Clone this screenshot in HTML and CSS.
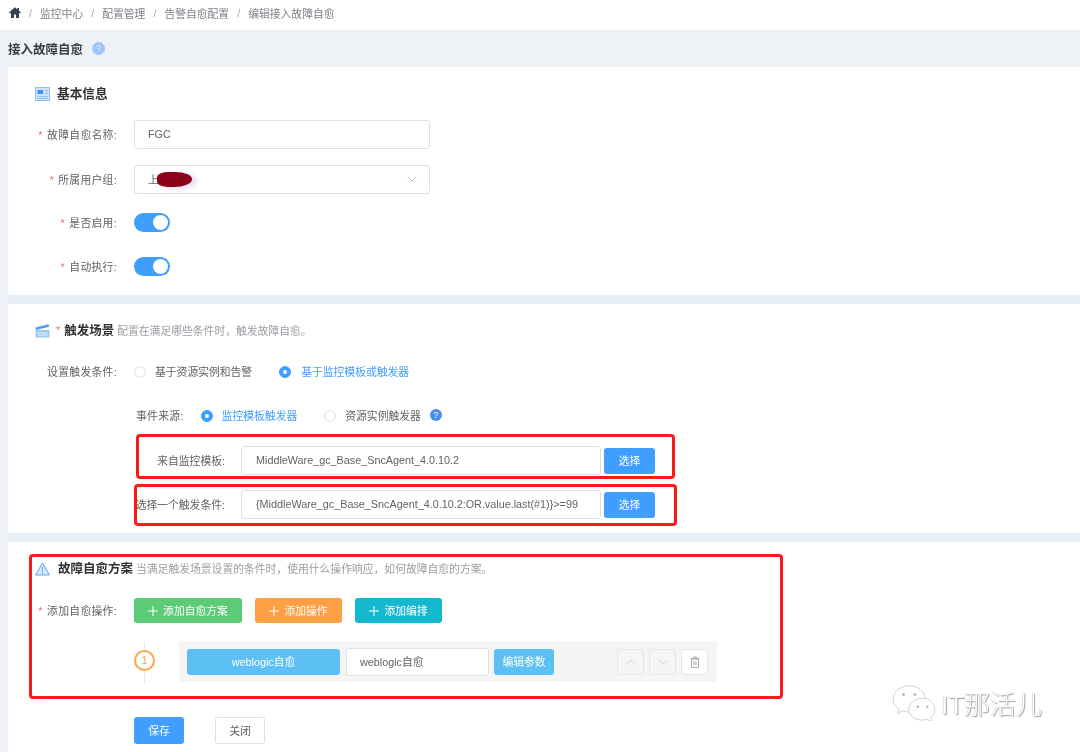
FILE: index.html
```html
<!DOCTYPE html>
<html lang="zh-CN">
<head>
<meta charset="utf-8">
<title>编辑接入故障自愈</title>
<link rel="stylesheet" href="styles.css">
</head>
<body>
<div class="page">
  <nav class="crumbs">
    <svg class="home" viewBox="0 0 12 11" width="12" height="11"><path d="M6 .3 0 5.500l.8.900L2 5.400V11h3V7.500h2V11h3V5.400l1.200 1 .8-.9-2-1.700V1H8.300v1.600z" fill="#35404e"/></svg>
    <i>/</i><span>监控中心</span><i>/</i><span>配置管理</span><i>/</i><span>告警自愈配置</span><i>/</i><span>编辑接入故障自愈</span>
  </nav>
  <h1 class="page-title">接入故障自愈<span class="title-help">?</span></h1>

  <section class="card card-basic">
    <header class="head head-basic">
      <svg viewBox="0 0 15 14" width="15" height="14"><rect x=".5" y=".5" width="14" height="13" fill="#cfe4fb" stroke="#8fc0f5"/><rect x="2.500" y="3" width="5.500" height="4" fill="#3f8fee"/><path d="M9.500 3.500h3.500M9.500 6h3.500M2.500 9.500h10.500M2.500 11.500h10.500" stroke="#8fc0f5"/></svg>
      <strong>基本信息</strong>
    </header>
    <div class="row row-first"><label class="lbl"><em>*</em> 故障自愈名称:</label><div class="input">FGC</div></div>
    <div class="row row-select"><label class="lbl"><em>*</em> 所属用户组:</label>
      <div class="input select"><span class="lift">上</span><span class="smudge"></span>
        <svg class="chev" viewBox="0 0 10 6" width="10" height="6"><path d="M.5.500 5 5 9.500.500" fill="none" stroke="#c0c4cc"/></svg>
      </div>
    </div>
    <div class="row"><label class="lbl"><em>*</em> 是否启用:</label><span class="switch"></span></div>
    <div class="row"><label class="lbl"><em>*</em> 自动执行:</label><span class="switch"></span></div>
  </section>

  <section class="card card-trigger">
    <header class="head">
      <svg viewBox="0 0 15 14" width="15" height="14"><path d="M.5 6h14v7.500H.5z" fill="#9ccaf8"/><path d="M.5 3.500 13.500.2l.7 2.600L.8 6z" fill="#4f9bec"/><path d="M2.500 9h10M2.500 11h10" stroke="#e4f0fd"/></svg>
      <em class="req">*</em><strong>触发场景</strong><small>配置在满足哪些条件时，触发故障自愈。</small>
    </header>
    <div class="row radios">
      <label class="lbl">设置触发条件:</label>
      <span class="radio"></span><span class="opt">基于资源实例和告警</span>
      <span class="radio on"></span><span class="opt active">基于监控模板或触发器</span>
    </div>
    <div class="row radios source">
      <span class="src-lbl">事件来源:</span>
      <span class="radio on"></span><span class="opt active">监控模板触发器</span>
      <span class="radio"></span><span class="opt">资源实例触发器</span>
      <span class="help">?</span>
    </div>
    <div class="row pick pick-first"><label class="lbl-wide">来自监控模板:</label><div class="input wide">MiddleWare_gc_Base_SncAgent_4.0.10.2</div><button class="btn blue pick-btn">选择</button></div>
    <div class="row pick"><label class="lbl-wide">选择一个触发条件:</label><div class="input wide">{MiddleWare_gc_Base_SncAgent_4.0.10.2:OR.value.last(#1)}&gt;=99</div><button class="btn blue pick-btn">选择</button></div>
    <div class="mark mark-a"></div>
    <div class="mark mark-b"></div>
  </section>

  <section class="card card-plan">
    <header class="head">
      <svg viewBox="0 0 15 14" width="15" height="14"><path d="M7.500 1 14.500 13H.5z" fill="#d5e7fb" stroke="#5ea5ee" stroke-linejoin="round"/><path d="M7.500 5v4.500M7.500 10.500v1.500" stroke="#5ea5ee"/></svg>
      <strong class="plan-title">故障自愈方案</strong><small>当满足触发场景设置的条件时，使用什么操作响应，如何故障自愈的方案。</small>
    </header>
    <div class="actions">
      <label class="lbl"><em>*</em> 添加自愈操作:</label>
      <button class="btn green add-a"><svg class="plus" viewBox="0 0 10 10" width="10" height="10"><path d="M5 0v10M0 5h10" stroke="#fff"/></svg>添加自愈方案</button>
      <button class="btn orange add-b"><svg class="plus" viewBox="0 0 10 10" width="10" height="10"><path d="M5 0v10M0 5h10" stroke="#fff"/></svg>添加操作</button>
      <button class="btn teal add-b"><svg class="plus" viewBox="0 0 10 10" width="10" height="10"><path d="M5 0v10M0 5h10" stroke="#fff"/></svg>添加编排</button>
    </div>
    <div class="step">
      <div class="step-no"><span>1</span></div>
      <div class="panel">
        <button class="btn sky sky-a">weblogic自愈</button>
        <div class="input step-input">weblogic自愈</div>
        <button class="btn sky sky-b">编辑参数</button>
        <div class="tools">
          <span class="tool"><svg viewBox="0 0 10 6" width="10" height="6"><path d="M.5 5.500 5 1l4.500 4.500" fill="none" stroke="#d2d4d8"/></svg></span>
          <span class="tool"><svg viewBox="0 0 10 6" width="10" height="6"><path d="M.5.500 5 5 9.500.500" fill="none" stroke="#d2d4d8"/></svg></span>
          <span class="tool tool-white"><svg viewBox="0 0 10 12" width="10" height="12"><path d="M1.500 3h7v8.500h-7zM.5 2.500h9M3.500 2.500V1h3v1.500M4 5v4.500M6 5v4.500" fill="none" stroke="#a8abb2"/></svg></span>
        </div>
      </div>
    </div>
    <div class="footer">
      <button class="btn blue save">保存</button>
      <button class="btn plain save">关闭</button>
    </div>
    <div class="mark mark-c"></div>
    <div class="watermark">
      <svg viewBox="0 0 46 38" width="44" height="36"><g fill="#fff" stroke="#d0d0d0"><path d="M18 1C8.600 1 1 7.300 1 15c0 4.500 2.500 8.300 6.400 10.800L5.500 30l5.500-2.500c2.200.6 4.500 1 7 1 9.400 0 17-5.900 17-13.500S27.400 1 18 1z"/><path d="M32 14c-8 0-14.500 5.300-14.500 11.800S24 37 32 37c1.800 0 3.500-.3 5-.8l5 2.300-1.300-4c2.900-2.100 4.300-5 4.300-8.700C45 19.300 40 14 32 14z"/></g><g fill="#b4b4b4"><circle cx="12" cy="10" r="1.500"/><circle cx="24" cy="10" r="1.500"/><circle cx="27" cy="23" r="1.300"/><circle cx="37" cy="23" r="1.300"/></g></svg>
      <span>IT那活儿</span>
    </div>
  </section>
</div>
</body>
</html>
```
FILE: styles.css
```css
* { box-sizing: border-box; }
html, body { margin: 0; height: 752px; overflow: hidden; }
body {
  background: #eef2f6;
  font-family: "Liberation Sans", "Noto Sans CJK SC", sans-serif;
  font-size: 10.8px;
  color: #606266;
}
.page { height: 752px; overflow: hidden; display: flex; flex-direction: column; filter: blur(0.3px); }

.crumbs {
  height: 30px; background: #fff; display: flex; align-items: center; gap: 8px;
  padding: 0 0 5px 9px; color: #7d8288; box-shadow: 0 1px 2px #e8ebef; flex: none;
}
.crumbs i { font-style: normal; color: #a6a9ad; width: 3px; }

.page-title {
  margin: 0; height: 37px; flex: none; display: flex; align-items: center; padding: 0 0 1px 8px;
  font-size: 12.5px; font-weight: 700; color: #3a3d42;
}
.title-help {
  width: 13px; height: 13px; border-radius: 50%; background: #9dc5f8; color: #dcebfd;
  font-size: 9px; line-height: 13px; text-align: center; margin-left: 9px; font-weight: 400;
}

.card { background: #fff; margin-left: 8px; position: relative; flex: none; border-radius: 3px 0 0 3px; }
.card-basic { height: 228px; padding-top: 18px; }
.card-trigger { height: 229px; margin-top: 9px; padding-top: 18px; }
.card-plan { flex: 1; margin-top: 9px; padding-top: 18px; border-radius: 3px 0 0 0; }
.card-trigger::before, .card-plan::before {
  content: ""; position: absolute; left: 0; right: 0; top: -9px; height: 9px; background: #e8eef5;
}

.head { height: 18px; display: flex; align-items: center; padding-left: 27px; }
.head strong, .head small, .req { padding-bottom: 3px; }
.head svg { margin-bottom: 1px; }
.head strong { font-size: 12.5px; color: #303133; font-weight: 700; }
.head small { font-size: 10.8px; color: #9a9da3; margin-left: 3px; }
.head-basic strong { margin-left: 7px; font-size: 12.7px; }
.head-basic { margin-bottom: 17px; }
.req { font-style: normal; color: #f56c6c; margin: 0 4px 0 6px; }
.plan-title { margin-left: 8px; }

.row { display: flex; align-items: center; height: 29px; margin-bottom: 15px; }
.row-first { margin-bottom: 16px; }
.row-select { margin-bottom: 14px; }
.lbl {
  width: 109px; margin-right: 17px; text-align: right; flex: none; white-space: nowrap;
  letter-spacing: .3px; padding-bottom: 2px;
}
.lbl em { font-style: normal; color: #f56c6c; margin-right: 1px; }

.input {
  width: 296px; height: 29px; border: 1px solid #dcdfe6; border-radius: 3px; background: #fff;
  display: flex; align-items: center; padding: 0 0 1px 13px; color: #606266; white-space: nowrap;
}
.wide { padding-left: 14px; }
.lift { padding-bottom: 1px; }
.smudge {
  width: 35px; height: 15px; background: #8b0018; border-radius: 35% 50% 55% 35%;
  margin-left: -2px; box-shadow: 5px 2px 5px #e6dcf3;
}
.chev { margin-left: auto; margin-right: 12px; }

.switch { width: 36px; height: 19px; border-radius: 10px; background: #409eff; position: relative; display: block; }
.switch::after {
  content: ""; position: absolute; right: 2px; top: 2px; width: 15px; height: 15px;
  border-radius: 50%; background: #fff;
}

.radios { margin-bottom: 0; }
.radio { width: 12px; height: 12px; border-radius: 50%; border: 1px solid #dcdfe6; background: #fff; flex: none; }
.radio.on { background: #409eff; border-color: #409eff; position: relative; }
.radio.on::after {
  content: ""; position: absolute; left: 3px; top: 3px; width: 4px; height: 4px;
  border-radius: 50%; background: #fff;
}
.opt { margin: 0 27px 0 9px; white-space: nowrap; padding-bottom: 2px; }
.radio.on + .opt { margin-left: 10px; }
.opt.active { color: #409eff; }
.card-trigger > .radios:nth-of-type(1) { margin-top: 17px; }
.source { padding-left: 128px; margin-top: 15px; }
.src-lbl { margin-right: 17px; letter-spacing: .3px; padding-bottom: 2px; }
.source .radio.on + .opt { margin-left: 9px; margin-right: 27px; }
.source .opt:nth-last-child(2) { margin-right: 9px; }
.help {
  width: 12px; height: 12px; border-radius: 50%; background: #4b8df0; color: #fff;
  font-size: 9px; line-height: 12px; text-align: center; margin-top: -1px;
}

.pick { margin-bottom: 15px; }
.pick-first { margin-top: 16px; }
.lbl-wide { width: 217px; margin-right: 16px; text-align: right; flex: none; white-space: nowrap; padding-bottom: 2px; }
.wide { width: 360px; }

.btn {
  border: 0; border-radius: 3px; color: #fff; font: inherit; height: 26px; padding: 0 0 2px;
  display: inline-flex; align-items: center; justify-content: center; white-space: nowrap;
}
.plus { margin: 2px 5px 0 0; }
.blue { background: #409eff; }
.green { background: #5ccb77; }
.orange { background: #ff9f43; }
.teal { background: #15b8cf; }
.sky { background: #5cc0f5; }
.plain { background: #fff; border: 1px solid #dcdfe6; color: #606266; }
.pick-btn { width: 51px; margin-left: 3px; }

.actions { display: flex; align-items: center; height: 25px; margin-top: 20px; }
.actions .btn { height: 25px; margin-right: 13px; }
.add-a { width: 108px; }
.add-b { width: 87px; }

.step { display: flex; margin: 18px 0 0 126px; height: 41px; }
.step-no { width: 22px; position: relative; display: flex; align-items: center; margin-right: 23px; flex: none; padding-bottom: 2px; }
.step-no::before {
  content: ""; position: absolute; left: 10px; top: 1px; bottom: -2px; width: 1px; background: #e8e8e8;
}
.step-no span {
  position: relative; width: 21px; height: 21px; border-radius: 50%; border: 2px solid #ffa64d;
  background: #fff; color: #f5a55c; text-align: center; line-height: 16px;
}
.panel {
  width: 538px; height: 41px; background: #f5f5f5; border-radius: 4px; display: flex; align-items: center;
  padding: 0 9px 0 8px;
}
.sky-a { width: 153px; margin-right: 6px; }
.step-input { width: 143px; height: 28px; margin-right: 5px; }
.sky-b { width: 60px; }
.tools { margin-left: auto; display: flex; gap: 5px; }
.tool {
  width: 27px; height: 26px; border: 1px solid #e6e6e6; border-radius: 3px; display: flex;
  align-items: center; justify-content: center;
}
.tool-white { background: #fff; }

.footer { display: flex; gap: 31px; margin: 35px 0 0 126px; }
.save { width: 50px; height: 27px; }

.mark { position: absolute; border: 3px solid #fb1a1a; border-radius: 4px; pointer-events: none; }
.mark-a { left: 128px; top: 130px; width: 539px; height: 45px; }
.mark-b { left: 126px; top: 180px; width: 543px; height: 42px; }
.mark-c { left: 21px; top: 12px; width: 754px; height: 145px; }

.watermark {
  position: absolute; left: 884px; top: 142px; display: flex; align-items: center; gap: 5px;
  color: #fff; font-size: 26px; font-weight: 300;
  text-shadow: 1px 1px 1px #9c9c9c, -.5px -.5px .5px #c4c4c4;
}
```
